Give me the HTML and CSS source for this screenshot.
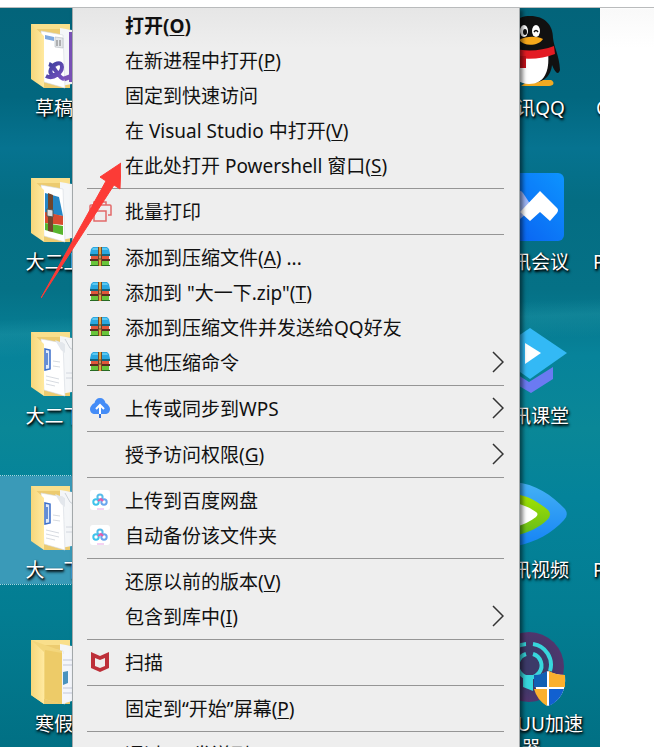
FILE: index.html
```html
<!DOCTYPE html>
<html lang="zh-CN">
<head>
    <meta charset="UTF-8">
    <meta name="viewport" content="width=device-width, initial-scale=1.0">
    <title>文件夹右键菜单</title>
    <link rel="stylesheet" href="styles.css">
</head>
<body>
    <!-- Shared icons -->
    <svg class="sprite" aria-hidden="true">
        <defs>
            <linearGradient id="gFlap" x1="0" x2="1" y1="0" y2="0">
                <stop offset="0" stop-color="#f6d77b"/>
                <stop offset="1" stop-color="#ffe9a0"/>
            </linearGradient>
            <linearGradient id="gMeet" x1="0" x2="1" y1="1" y2="0">
                <stop offset="0" stop-color="#0a5cf0"/>
                <stop offset="1" stop-color="#0d94ff"/>
            </linearGradient>
            <linearGradient id="gLoop" x1="0" x2="1" y1="0" y2="1">
                <stop offset="0" stop-color="#3b3f9c"/>
                <stop offset="1" stop-color="#7a52c0"/>
            </linearGradient>
            <linearGradient id="gGreen" x1="0" x2="0" y1="0" y2="1">
                <stop offset="0" stop-color="#a4e300"/>
                <stop offset="1" stop-color="#62bb1c"/>
            </linearGradient>
            <linearGradient id="gBlue" x1="0" x2="0" y1="0" y2="1">
                <stop offset="0" stop-color="#45b2f5"/>
                <stop offset="1" stop-color="#1583f5"/>
            </linearGradient>
            <radialGradient id="gUu">
                <stop offset="0.5" stop-color="#3c3a68"/>
                <stop offset="1" stop-color="#51356d"/>
            </radialGradient>
        </defs>
        <symbol id="folder" viewBox="0 0 108 80">
            <path d="M31 10h39v64H44z" fill="#eccb70"/>
            <path d="M31 10h39v5H34z" fill="#f9df8c"/>
            <path d="M60 14l12 2v54l-12 2z" fill="#f4f6f8"/>
            <path d="M41 17l22 4 2 53-21-6z" fill="#fff" stroke="#d5dae0" stroke-width=".6"/>
            <path d="M31 10l13 12v52l-13-9z" fill="url(#gFlap)"/>
        </symbol>
        <symbol id="docs" viewBox="0 0 108 80">
            <path d="M55 18l6 10 4 3V22z" fill="#e3e7ec"/>
            <path d="M65 17l5 9 3 2" fill="none" stroke="#cdd2d8"/>
            <path d="M45 27l5 1v19l-5 1z" fill="#dfeafb" stroke="#3d6fc9" stroke-width="1.5"/>
            <path d="M47 31v12" stroke="#3d6fc9" stroke-width="1.5"/>
            <path d="M46 54l13 3M46 58l13 3M46 62l9 2M53 39l7 1M53 44l7 1M66 51h6M66 56h6" stroke="#ccd1d8" stroke-width=".8"/>
        </symbol>
        <symbol id="rar" viewBox="0 0 20 20">
            <path d="M3 0h14l2 2 1 5H0l1-5z" fill="#2aa7df"/>
            <path d="M3 1h14l1 2H2z" fill="#5cc8f0"/>
            <path d="M0 7h20v2H0z" fill="#12657e"/>
            <path d="M1 9h18v4H1z" fill="#e0573a"/>
            <path d="M0 12h20v2H0z" fill="#5b2c20"/>
            <path d="M1 14h18v4H1z" fill="#69c53a"/>
            <path d="M0 18h20v1H0z" fill="#276a22"/>
            <path d="M8 0h4v19H8z" fill="#7a4a26"/>
            <path d="M9 0h2v19H9z" fill="#e2a340"/>
            <path d="M9 8h2v4H9z" fill="#f0d9a0" stroke="#5c3818" stroke-width=".8"/>
        </symbol>
        <symbol id="pan" viewBox="0 0 20 20">
            <rect width="20" height="20" rx="3" fill="#fff"/>
            <g fill="none" stroke-width="2">
                <circle cx="10" cy="7" r="2.600" stroke="#58bdea"/>
                <circle cx="6" cy="12" r="2.700" stroke="#3fc3ec"/>
                <circle cx="14" cy="12" r="2.700" stroke="#6aa6ee"/>
                <path d="M8 11l3-2 2 2" stroke="#ea5ba8"/>
            </g>
            <path d="M7 19h7" stroke="#e9a6e6"/>
        </symbol>
        <symbol id="chevron" viewBox="0 0 12 22">
            <path d="M1 1l10 10L1 21" fill="none" stroke="#333" stroke-width="1.500"/>
        </symbol>
    </svg>

    <div class="top-strip"></div>
    <main class="desktop">
        <div class="column">
            <div class="tile">
                <svg class="picture" viewBox="0 0 108 80">
                    <use href="#folder"/>
                    <path d="M69 18h3v50h-3z" fill="#7a52b8"/>
                    <path d="M45 21l9 2v4l-9-2z" fill="#7fa8de"/>
                    <path d="M55 23l8 1v10l-8-1z" fill="#e4e7ea" stroke="#b4b9be" stroke-width=".6"/>
                    <path d="M57 26v6M60 26v6" stroke="#777"/>
                    <path d="M49 50c6 2 9 14 15 15M46 62c8 4 16-4 16-9 0-7-9-3-11 2s2 8 8 4" fill="none" stroke="url(#gLoop)" stroke-width="4"/>
                    <path d="M64 65l8-3" stroke="#7a52b8" stroke-width="5"/>
                </svg>
                <span class="label">草稿</span>
            </div>
            <div class="tile">
                <svg class="picture" viewBox="0 0 108 80">
                    <use href="#folder"/>
                    <path d="M45 25l14 4 4 19-18-3z" fill="#2587c5"/>
                    <path d="M45 44l18 4v9l-18-2z" fill="#d84b30"/>
                    <path d="M45 55l18 3v9l-18-5z" fill="#58b42e"/>
                    <path d="M48 25l5 2v37l-5-1z" fill="#70452d"/>
                    <path d="M47 41l6 1v7l-6-1z" fill="#ddd" stroke="#555"/>
                </svg>
                <span class="label">大二上</span>
            </div>
            <div class="tile">
                <svg class="picture" viewBox="0 0 108 80"><use href="#folder"/><use href="#docs"/></svg>
                <span class="label">大二下</span>
            </div>
            <div class="tile selected">
                <svg class="picture" viewBox="0 0 108 80"><use href="#folder"/><use href="#docs"/></svg>
                <span class="label">大一下</span>
            </div>
            <div class="tile">
                <svg class="picture" viewBox="0 0 108 80">
                    <use href="#folder"/>
                    <path d="M31 10l31 11v53l-18-5-13-7z" fill="#f3d67c"/>
                    <path d="M45 20l17 3v51l-17-5z" fill="#edcb68"/>
                    <path d="M31 10l13 12v52l-13-9z" fill="url(#gFlap)"/>
                    <path d="M62 24l10-1v48l-10 3z" fill="#f4f6fb"/>
                    <path d="M63 30h9M63 35h9M63 58h9M63 63h9" stroke="#c3c8d8"/>
                    <path d="M63 42l5-1v12l-5 2z" fill="#4b93bd"/>
                </svg>
                <span class="label">寒假</span>
            </div>
        </div>

        <div class="column">
            <div class="tile">
                <svg class="picture" viewBox="0 0 108 80">
                    <path d="M52 66h22c4 2 3 6-2 6H44z" fill="#f2aa22"/>
                    <path d="M53 2c15 0 23 9 23 22 1 10 6 16 7 32-2 7-6 0-8-5-1 10-7 18-22 18S31 60 31 40V24C31 10 40 2 53 2z" fill="#111"/>
                    <path d="M36 38h35c2 20-4 32-19 32-9 0-15-5-17-12z" fill="#fff"/>
                    <path d="M34 34c15 4 30 3 43-2l1 8c-12 5-28 6-44 3z" fill="#e31b23"/>
                    <path d="M43 42h6v12h-6z" fill="#c5121b"/>
                    <ellipse cx="47" cy="17" rx="4" ry="6" fill="#fff"/>
                    <ellipse cx="59" cy="17" rx="4" ry="6" fill="#fff"/>
                    <ellipse cx="48" cy="18" rx="2" ry="3" fill="#111"/>
                    <path d="M57 18q2-3 4 0" fill="none" stroke="#111" stroke-width="1.500"/>
                    <path d="M42 26c7-4 18-4 24-1-4 7-19 8-24 1z" fill="#f7a81b"/>
                </svg>
                <span class="label">腾讯QQ</span>
            </div>
            <div class="tile">
                <svg class="picture" viewBox="0 0 108 80">
                    <rect x="22" y="5" width="65" height="68" rx="6" fill="url(#gMeet)"/>
                    <path d="M32 30l9-7q3-1 5 2l10 15-13 11z" fill="#9db5f5"/>
                    <path d="M63 23l17 17q2 2 0 5l-7 8-10-9-10 9-10-9z" fill="#fff"/>
                </svg>
                <span class="label">腾讯会议</span>
            </div>
            <div class="tile">
                <svg class="picture" viewBox="0 0 108 80">
                    <path d="M30 46l22 14 24-15v12L54 71 30 57z" fill="#6b7af2"/>
                    <path d="M53 6l37 25-37 26-37-26z" fill="#33b9f5"/>
                    <path d="M48 21l16 10-16 11z" fill="#fff"/>
                </svg>
                <span class="label">腾讯课堂</span>
            </div>
            <div class="tile">
                <svg class="picture" viewBox="0 0 108 80">
                    <path d="M38 6c20 2 37 13 50 27q4 6-1 11C75 57 59 66 40 70z" fill="url(#gBlue)"/>
                    <path d="M38 18c14 2 23 8 33 16q4 4 0 9c-9 9-19 13-33 17z" fill="url(#gGreen)"/>
                    <path d="M38 27q13 3 21 9 3 2 0 5-9 7-21 10z" fill="#fff"/>
                </svg>
                <span class="label">腾讯视频</span>
            </div>
            <div class="tile">
                <svg class="picture" viewBox="0 0 108 80">
                    <circle cx="52" cy="37" r="35" fill="url(#gUu)"/>
                    <g fill="none" stroke="#37d6dc">
                        <path d="M49 14a21 21 0 0 0-16 33M56 14a21 21 0 0 1 17 27" stroke-width="4"/>
                        <path d="M49 24a12 12 0 1 0 7 0" stroke-width="4"/>
                    </g>
                    <path d="M46 45h10v16l-10-4z" fill="#37d6dc"/>
                    <path d="M58 45q7 0 13-4 7 4 17 4 2 23-17 31-14-8-13-31z" fill="#fff"/>
                    <path d="M57 45q7 0 13-4v16H57z" fill="#1160b4"/>
                    <path d="M72 41q7 4 16 4v12H72z" fill="#fbb02e"/>
                    <path d="M57 59h13v17q-10-6-13-17z" fill="#fbb02e"/>
                    <path d="M72 59h15q-4 12-15 17z" fill="#1160d0"/>
                </svg>
                <span class="label">网易UU加速器</span>
            </div>
        </div>

        <!-- Next column, cut by the desktop edge -->
        <div class="column cut">
            <div class="tile"><span class="picture"></span><span class="label indent">C</span></div>
            <div class="tile"><span class="picture"></span><span class="label">P</span></div>
            <div class="tile"><span class="picture"></span><span class="label"></span></div>
            <div class="tile"><span class="picture"></span><span class="label">P</span></div>
        </div>

        <ul class="menu">
            <li><button class="item default"><span class="icon"></span><span>打开(<u>O</u>)</span></button></li>
            <li><button class="item"><span class="icon"></span><span>在新进程中打开(<u>P</u>)</span></button></li>
            <li><button class="item"><span class="icon"></span><span>固定到快速访问</span></button></li>
            <li><button class="item"><span class="icon"></span><span>在 Visual Studio 中打开(<u>V</u>)</span></button></li>
            <li><button class="item"><span class="icon"></span><span>在此处打开 Powershell 窗口(<u>S</u>)</span></button></li>
            <li class="separator"></li>
            <li><button class="item">
                <svg class="icon" viewBox="0 0 20 20">
                    <path d="M4 4V1h12v3M5 14H0V5q0-1 1-1h19q1 0 1 1v9h-3M4 10h12v10H4z" fill="none" stroke="#e26a6a" stroke-width="1.500"/>
                </svg>
                <span>批量打印</span></button></li>
            <li class="separator"></li>
            <li><button class="item"><svg class="icon"><use href="#rar"/></svg><span>添加到压缩文件(<u>A</u>) ...</span></button></li>
            <li><button class="item"><svg class="icon"><use href="#rar"/></svg><span>添加到 "大一下.zip"(<u>T</u>)</span></button></li>
            <li><button class="item"><svg class="icon"><use href="#rar"/></svg><span>添加到压缩文件并发送给QQ好友</span></button></li>
            <li><button class="item"><svg class="icon"><use href="#rar"/></svg><span>其他压缩命令</span><svg class="chevron"><use href="#chevron"/></svg></button></li>
            <li class="separator"></li>
            <li><button class="item">
                <svg class="icon" viewBox="0 0 20 20">
                    <path d="M10 0c3 0 5 2 5.500 5C18 6 20 9 20 11c0 3-2 5-5 5H5c-3 0-5-2-5-5 0-2 2-5 4.500-6C5 2 7 0 10 0z" fill="#448cf7"/>
                    <path d="M10 8v8M6 11l4-4 4 4" fill="none" stroke="#fff" stroke-width="2"/>
                    <path d="M10 16v4" stroke="#3972d8" stroke-width="2"/>
                </svg>
                <span>上传或同步到WPS</span><svg class="chevron"><use href="#chevron"/></svg></button></li>
            <li class="separator"></li>
            <li><button class="item"><span class="icon"></span><span>授予访问权限(<u>G</u>)</span><svg class="chevron"><use href="#chevron"/></svg></button></li>
            <li class="separator"></li>
            <li><button class="item"><svg class="icon"><use href="#pan"/></svg><span>上传到百度网盘</span></button></li>
            <li><button class="item"><svg class="icon"><use href="#pan"/></svg><span>自动备份该文件夹</span></button></li>
            <li class="separator"></li>
            <li><button class="item"><span class="icon"></span><span>还原以前的版本(<u>V</u>)</span></button></li>
            <li><button class="item"><span class="icon"></span><span>包含到库中(<u>I</u>)</span><svg class="chevron"><use href="#chevron"/></svg></button></li>
            <li class="separator"></li>
            <li><button class="item">
                <svg class="icon" viewBox="0 0 20 20">
                    <path d="M1 0l9 4 9-4v16l-9 4-9-4zM5 6v8l5 2 5-2V6l-5 2z" fill="#bd3039" fill-rule="evenodd"/>
                </svg>
                <span>扫描</span></button></li>
            <li class="separator"></li>
            <li><button class="item"><span class="icon"></span><span>固定到“开始”屏幕(<u>P</u>)</span></button></li>
            <li class="separator"></li>
            <li><button class="item"><span class="icon"></span><span>通过QQ发送到</span></button></li>
        </ul>

        <svg class="arrow" viewBox="0 0 80 136" aria-hidden="true">
            <path d="M80 1L59 15l6 4L0 136l73-113 6 4z" fill="#fc3b36" stroke="#fc3b36"/>
        </svg>
    </main>
</body>
</html>
```

FILE: styles.css
```css
* {
    box-sizing: border-box;
}
body {
    margin: 0;
    height: 100vh;
    overflow: hidden;
    display: flex;
    flex-direction: column;
    background: linear-gradient(#fff 8px, #f9f9f9 9px, #fff 48px);
    font-family: "Noto Sans", "Noto Sans CJK SC", sans-serif;
    font-size: 19px;
}
.sprite {
    position: absolute;
    width: 0;
    height: 0;
}
.top-strip {
    flex: none;
    height: 8px;
    background: #fff;
    border-bottom: 1px solid #b9bbbc;
}
.desktop {
    position: relative;
    flex: 1;
    min-height: 0;
    max-width: 600px;
    width: 100%;
    display: grid;
    grid-template-columns: 108px 1fr 108px 15px;
    padding-top: 6px;
    overflow: hidden;
    background:
        linear-gradient(178deg, transparent 41%, rgba(60, 180, 190, 0.2) 43%, transparent 46%),
        linear-gradient(#03647a 0%, #02677f 12%, #067390 19%, #046d83 26%, #057186 38%, #07839a 47%, #0a8797 57%, #04839a 66%, #037d92 82%, #017084 100%);
}
.column:nth-child(2) {
    grid-column: 3;
}
.cut {
    grid-column: 4;
    overflow: hidden;
}
.tile {
    display: flex;
    flex-direction: column;
    height: 108px;
    margin-bottom: 46px;
}
.selected {
    background: #3a9ab8;
    outline: 1px dotted #a8d4e0;
}
.picture {
    flex: none;
    display: block;
    width: 100%;
    height: 80px;
}
.label {
    padding-top: 2px;
    color: #fff;
    line-height: 24px;
    text-align: center;
    text-shadow: 1px 1px 2px #000, 1px 2px 3px #000;
}
.cut .label {
    padding-left: 8px;
    text-align: left;
}
.cut .indent {
    padding-left: 11px;
}

/* Context menu */
.menu {
    position: absolute;
    top: 0;
    left: 72px;
    right: 80px;
    margin: 0;
    padding: 0;
    list-style: none;
    background: linear-gradient(#e6e6e6, #eee 40px);
    border: 1px solid #a3a8aa;
    border-top: none;
    box-shadow: 3px 2px 4px rgba(0, 0, 0, 0.5);
}
.item {
    display: flex;
    align-items: center;
    gap: 15px;
    width: 100%;
    height: 35px;
    padding: 0 15px 2px 17px;
    border: none;
    background: none;
    color: #111;
    font: inherit;
    text-align: left;
    white-space: nowrap;
}
.item:hover {
    background: #fff;
}
.default {
    font-weight: bold;
}
.icon {
    flex: none;
    width: 20px;
    height: 20px;
    overflow: visible;
}
.item u {
    text-decoration-thickness: 1px;
    text-underline-offset: 2px;
}
.chevron {
    flex: none;
    width: 12px;
    height: 22px;
    margin-left: auto;
}
.separator {
    height: 1px;
    margin: 5px 15px 5px 14px;
    background: #959595;
}

.arrow {
    position: absolute;
    top: 154px;
    left: 41px;
    width: 80px;
    height: 136px;
}
```
